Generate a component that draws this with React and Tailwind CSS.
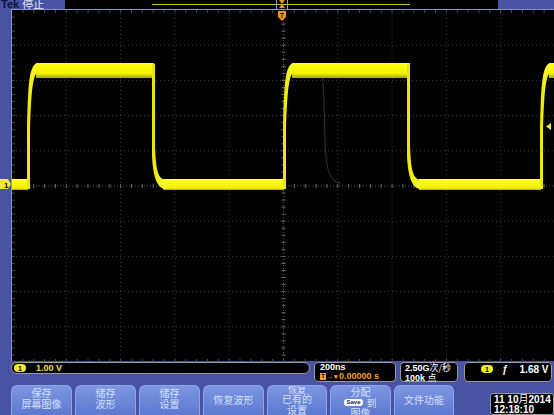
import React from 'react';

const W = 543;
const H = 352;
const DX = W / 10;
const DY = H / 10;

const sans = { fontFamily: '"Liberation Sans", "Noto Sans CJK SC", sans-serif' };
const cjk = { fontFamily: '"Noto Sans CJK SC", "Liberation Sans", sans-serif' };

function Grid() {
  const items = [];
  for (let i = 1; i < 10; i++) {
    if (i === 5) continue;
    items.push(<line key={'v' + i} x1={i * DX} y1={0} x2={i * DX} y2={H} stroke="#3a3a3a" strokeDasharray="1 3" />);
    items.push(<line key={'h' + i} x1={0} y1={i * DY} x2={W} y2={i * DY} stroke="#3a3a3a" strokeDasharray="1 3" />);
  }
  // center axes with ticks
  items.push(<line key="cv" x1={5 * DX} y1={0} x2={5 * DX} y2={H} stroke="#5a5a5a" strokeDasharray="1 2" />);
  items.push(<line key="ch" x1={0} y1={5 * DY} x2={W} y2={5 * DY} stroke="#5a5a5a" strokeDasharray="1 2" />);
  for (let i = 1; i < 50; i++) {
    const x = (i * DX) / 5;
    const y = (i * DY) / 5;
    items.push(<line key={'tx' + i} x1={x} y1={5 * DY - 2} x2={x} y2={5 * DY + 2} stroke="#6a6a6a" />);
    items.push(<line key={'ty' + i} x1={5 * DX - 2} y1={y} x2={5 * DX + 2} y2={y} stroke="#6a6a6a" />);
    items.push(<line key={'bt' + i} x1={x} y1={0} x2={x} y2={3} stroke="#4a4a4a" />);
    items.push(<line key={'bb' + i} x1={x} y1={H - 3} x2={x} y2={H} stroke="#4a4a4a" />);
    items.push(<line key={'bl' + i} x1={0} y1={y} x2={3} y2={y} stroke="#4a4a4a" />);
  }
  return <g>{items}</g>;
}

function Rise({ x }) {
  return (
    <path
      d={`M${x - 1},188 L${x - 1},130 C${x},82 ${x + 1},65 ${x + 9},62 L${x + 9},72 C${x + 5},74 ${x + 3},92 ${x + 2},130 L${x + 2},188 Z`}
      fill="url(#edge)"
    />
  );
}

function Fall({ x }) {
  return (
    <path
      d={`M${x - 2},63 L${x + 1},63 L${x + 1},145 C${x + 2},170 ${x + 4},178 ${x + 12},179 L${x + 12},188 C${x + 4},188 ${x - 1},178 ${x - 2},155 Z`}
      fill="url(#edge)"
    />
  );
}

function Waveform() {
  return (
    <g transform="translate(-11 -9)">
      <defs>
        <linearGradient id="hi" gradientUnits="userSpaceOnUse" x1="0" y1="61" x2="0" y2="77">
          <stop offset="0" stopColor="#ffff60" />
          <stop offset="0.12" stopColor="#ffff10" />
          <stop offset="0.7" stopColor="#f6f200" />
          <stop offset="1" stopColor="#a8a400" />
        </linearGradient>
        <linearGradient id="lo" gradientUnits="userSpaceOnUse" x1="0" y1="178" x2="0" y2="189">
          <stop offset="0" stopColor="#ffff80" />
          <stop offset="0.2" stopColor="#ffff10" />
          <stop offset="0.85" stopColor="#f2ee00" />
          <stop offset="1" stopColor="#a09c00" />
        </linearGradient>
        <linearGradient id="edge" x1="0" y1="0" x2="1" y2="0">
          <stop offset="0" stopColor="#e8e400" />
          <stop offset="1" stopColor="#ffff30" />
        </linearGradient>
      </defs>
      {/* ghost trace */}
      <path d="M318,66 C322,66 323,92 324,140 C325,170 329,181 340,182" fill="none" stroke="#a8a400" strokeOpacity="0.35" strokeWidth="1" />
      {/* low bands */}
      <rect x="11" y="178" width="16" height="11" fill="url(#lo)" />
      <rect x="162" y="178" width="121" height="11" fill="url(#lo)" />
      <rect x="418" y="178" width="122" height="11" fill="url(#lo)" />
      {/* high bands */}
      <rect x="35" y="62" width="118" height="15" fill="url(#hi)" />
      <rect x="291" y="62" width="118" height="15" fill="url(#hi)" />
      <rect x="548" y="62" width="8" height="15" fill="url(#hi)" />
      <Rise x={27} />
      <Rise x={283} />
      <Rise x={540} />
      <Fall x={153} />
      <Fall x={408} />
    </g>
  );
}

function Pill({ children }) {
  return (
    <span className="inline-flex items-center justify-center w-[12px] h-[8px] rounded-full bg-[#f2ea2a] text-black text-[7px] font-bold leading-none">
      {children}
    </span>
  );
}

function Btn({ w, children, className = '' }) {
  return (
    <div
      className={`flex flex-col items-center h-[30px] overflow-hidden rounded-t-[6px] border-t border-x border-[#8ea4ea] bg-gradient-to-b from-[#7c96e2] to-[#5d79d0] text-[#d6e0fb] text-[10px] leading-[10.5px] ${className}`}
      style={{ ...cjk, width: w }}
    >
      {children}
    </div>
  );
}

export default function App() {
  return (
    <div className="relative w-[554px] h-[415px] overflow-hidden bg-[#4853a4]" style={sans}>
      {/* top strip */}
      <div className="flex h-[9px]">
        <div className="w-[65px] overflow-hidden flex items-end pl-[1px]">
          <span className="text-[11px] leading-none font-bold text-[#0c1440] -mb-[1px]">Tek</span>
          <span className="text-[11px] leading-none text-[#e4e8ff] ml-[3px] -mb-[1px]" style={cjk}>停止</span>
        </div>
        <div className="relative w-[433px] bg-black">
          <div className="absolute left-[87px] top-[4px] w-[258px] h-[1px] bg-[#c8c400]" />
          <div className="absolute left-[211px] top-0 w-[12px] h-[9px] border-x border-[#9aa0c0]" />
        </div>
        <div className="flex-1" />
      </div>

      {/* graticule row */}
      <div className="flex">
        <div className="w-[11px]" />
        <div className="w-[543px] h-[352px] bg-black border-t border-l border-[#8a94c6]">
          <svg width={W} height={H} className="block">
            <Grid />
            <Waveform />
          </svg>
        </div>
      </div>

      {/* status row */}
      <div className="flex items-start gap-[4px] pl-[11px] mt-[1px] h-[20px]">
        <div className="w-[299px] h-[12px] rounded-[6px] border border-[#9a9a9a] bg-black flex items-center pl-[2px] gap-[10px]">
          <Pill>1</Pill>
          <span className="text-[9px] font-bold text-[#f2e24a] leading-none">1.00 V</span>
        </div>
        <div className="w-[82px] h-[20px] rounded-[4px] border border-[#9a9a9a] bg-black flex flex-col pl-[5px] text-[9px] font-bold leading-[9px]">
          <span className="text-white">200ns</span>
          <span className="flex items-center text-[#f0a028]">
            <span className="w-[6px] h-[7px] bg-[#f0a028] text-black text-[6px] leading-[7px] text-center mr-[1px]">T</span>
            <span className="text-[7px] mr-[1px]">→▾</span>
            0.00000 s
          </span>
        </div>
        <div className="w-[58px] h-[20px] rounded-[4px] border border-[#9a9a9a] bg-black flex flex-col pl-[4px] text-[9px] font-bold leading-[9px] text-white">
          <span>2.50G<span style={cjk} className="font-normal">次/秒</span></span>
          <span>100k <span style={cjk} className="font-normal">点</span></span>
        </div>
        <div className="ml-[2px] w-[88px] h-[20px] rounded-[4px] border border-[#9a9a9a] bg-black flex items-start pt-[2px] pl-[16px] text-[10px] font-bold leading-[9px] text-white">
          <Pill>1</Pill>
          <span className="ml-[9px] italic">ƒ</span>
          <span className="ml-[12px]">1.68 V</span>
        </div>
      </div>

      {/* soft keys */}
      <div className="flex items-start gap-[3px] pl-[11px] mt-[3px]">
        <Btn w={61} className="pt-[2px]"><span>保存</span><span>屏幕图像</span></Btn>
        <Btn w={61} className="pt-[2px]"><span>储存</span><span>波形</span></Btn>
        <Btn w={61} className="pt-[2px]"><span>储存</span><span>设置</span></Btn>
        <Btn w={61} className="justify-center"><span>恢复波形</span></Btn>
        <Btn w={60}><span className="text-[9px] leading-[8px]">恢复</span><span>已有的</span><span>设置</span></Btn>
        <Btn w={61} className="pt-[1px]">
          <span>分配</span>
          <span className="flex items-center">
            <span className="px-[2px] mr-[4px] rounded-[3px] bg-white text-[#1a2460] text-[6px] font-bold leading-[7px]" style={sans}>Save</span>
            到
          </span>
          <span>图像</span>
        </Btn>
        <Btn w={60} className="justify-center"><span>文件功能</span></Btn>
        <div className="ml-auto mt-[8px] w-[64px] h-[22px] rounded-[3px] border border-[#9a9a9a] bg-black flex flex-col justify-center pl-[3px] text-[10px] font-bold leading-[9.5px] text-white">
          <span>11 10<span style={cjk} className="font-normal">月</span>2014</span>
          <span>12:18:10</span>
        </div>
      </div>

      {/* overlay markers */}
      <svg className="absolute left-0 top-[179px]" width="12" height="10">
        <path d="M0,0 L8,0 L11,5 L8,10 L0,10 Z" fill="#f2ea2a" />
        <text x="4" y="8.5" fontSize="8" fontWeight="bold" fill="#000" fontFamily="Liberation Sans">1</text>
      </svg>
      <svg className="absolute left-[546px] top-[123px]" width="6" height="7">
        <path d="M0,3.5 L5,0 L5,7 Z" fill="#f2ea2a" />
      </svg>
      <svg className="absolute left-[277px] top-0" width="10" height="21">
        <path d="M2,0 L8,0 L5,4 L8,8 L2,8 L5,4 Z" fill="#e8941c" />
        <path d="M1,11 L9,11 L9,17 L5,21 L1,17 Z" fill="#e8941c" />
        <path d="M3,13 L7,13 L7,14 L5.5,14 L5.5,18 L4.5,18 L4.5,14 L3,14 Z" fill="#3a2200" />
      </svg>
    </div>
  );
}
